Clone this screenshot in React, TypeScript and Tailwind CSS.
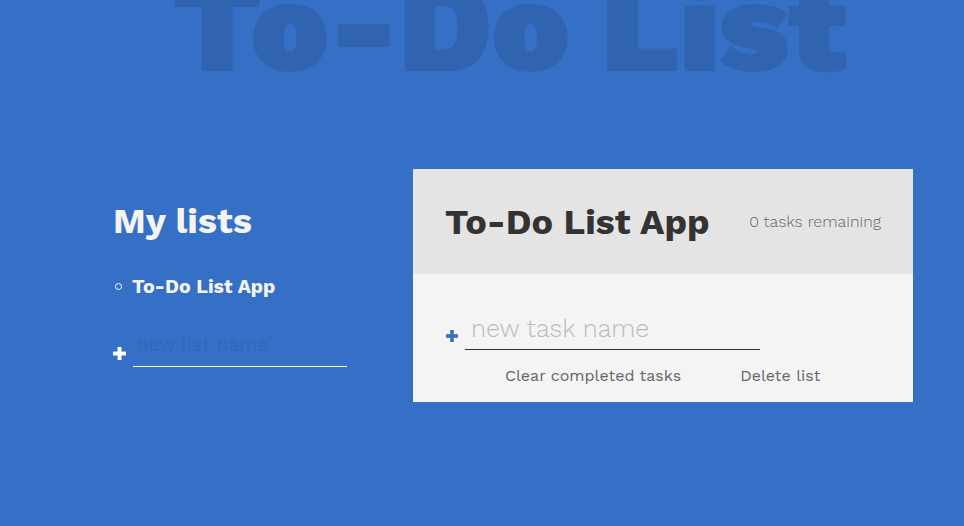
import React from "react"

const font = { fontFamily: '"Work Sans", Inter, "Noto Sans", sans-serif' }

function Plus({ className }: { className: string }) {
  return (
    <svg viewBox="0 0 12 12" className={className} fill="currentColor">
      <rect x="4.2" y="0" width="3.6" height="12" />
      <rect x="0" y="4.2" width="12" height="3.6" />
    </svg>
  )
}

export default function App() {
  return (
    <div className="relative min-h-[526px] w-full overflow-hidden bg-[#3670c6]" style={font}>
      <h1 className="text-center text-[132px] font-black leading-none tracking-[-0.01em] text-black/10 -mt-[40px] ml-[54px]">
        To-Do List
      </h1>

      <div className="mt-[77px] flex items-start pl-[113px]">
        <div className="w-[300px] pt-[34px] text-[#f4f4f4]">
          <h2 className="text-[36px] font-bold leading-none">My lists</h2>
          <ul className="mt-[33px]">
            <li className="flex items-center gap-[10px] pl-[2px] text-[19.5px] font-bold">
              <span className="h-[7px] w-[7px] rounded-full border border-white" />
              To-Do List App
            </li>
          </ul>
          <div className="mt-[34px] flex items-end gap-[7px]">
            <Plus className="mb-[7px] h-[13px] w-[13px] text-white" />
            <div className="w-[214px] border-b border-white pb-[12px] pl-[4px] text-[19px] leading-none text-black/10">
              new list name
            </div>
          </div>
        </div>

        <div className="w-[500px]">
          <div className="flex h-[105px] items-center justify-between bg-[#e4e4e4] px-[32px] text-[#333]">
            <h2 className="text-[36px] font-bold leading-none">To-Do List App</h2>
            <span className="text-[16px] font-light text-[#666]">0 tasks remaining</span>
          </div>
          <div className="h-[128px] bg-[#f4f4f4] px-[33px] pt-[42px]">
            <div className="flex items-end gap-[7px]">
              <Plus className="mb-[8px] h-[12px] w-[12px] text-[#3670c6]" />
              <div className="w-[295px] border-b border-[#333] pb-[8px] pl-[6px] text-[25px] font-light leading-none text-[#bbb]">
                new task name
              </div>
            </div>
            <div className="mt-[14px] flex gap-[59px] pl-[59px] text-[16px] text-[#666]">
              <span>Clear completed tasks</span>
              <span>Delete list</span>
            </div>
          </div>
        </div>
      </div>
    </div>
  )
}
